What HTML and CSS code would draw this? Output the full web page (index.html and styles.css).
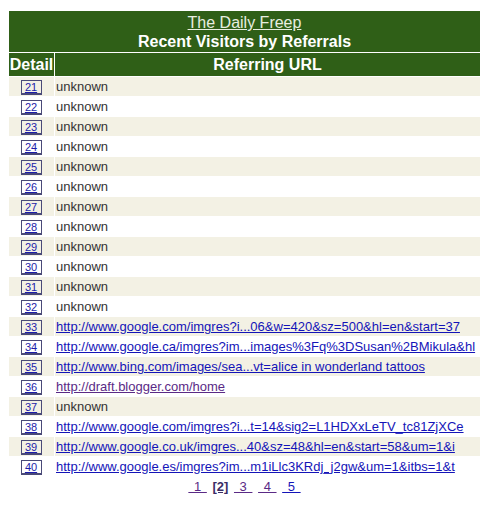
FILE: index.html
```html
<!DOCTYPE html>
<html lang="en">
<head>
    <meta charset="UTF-8">
    <title>Recent Visitors by Referrals</title>
    <link rel="stylesheet" href="styles.css">
</head>
<body>
    <table class="visitors">
        <colgroup>
            <col class="col-detail">
            <col class="col-url">
        </colgroup>
        <tr>
            <th colspan="2" class="title">
                <a href="#" class="site">The Daily Freep</a><br>
                Recent Visitors by Referrals
            </th>
        </tr>
        <tr class="head">
            <th>Detail</th>
            <th>Referring URL</th>
        </tr>
        <tr class="alt"><td class="num"><a href="#">21</a></td><td class="url">unknown</td></tr>
        <tr><td class="num"><a href="#">22</a></td><td class="url">unknown</td></tr>
        <tr class="alt"><td class="num"><a href="#">23</a></td><td class="url">unknown</td></tr>
        <tr><td class="num"><a href="#">24</a></td><td class="url">unknown</td></tr>
        <tr class="alt"><td class="num"><a href="#">25</a></td><td class="url">unknown</td></tr>
        <tr><td class="num"><a href="#">26</a></td><td class="url">unknown</td></tr>
        <tr class="alt"><td class="num"><a href="#">27</a></td><td class="url">unknown</td></tr>
        <tr><td class="num"><a href="#">28</a></td><td class="url">unknown</td></tr>
        <tr class="alt"><td class="num"><a href="#">29</a></td><td class="url">unknown</td></tr>
        <tr><td class="num"><a href="#">30</a></td><td class="url">unknown</td></tr>
        <tr class="alt"><td class="num"><a href="#">31</a></td><td class="url">unknown</td></tr>
        <tr><td class="num"><a href="#">32</a></td><td class="url">unknown</td></tr>
        <tr class="alt"><td class="num"><a href="#">33</a></td><td class="url"><a href="#">http://www.google.com/imgres?i...06&amp;w=420&amp;sz=500&amp;hl=en&amp;start=37</a></td></tr>
        <tr><td class="num"><a href="#">34</a></td><td class="url"><a href="#">http://www.google.ca/imgres?im...images%3Fq%3DSusan%2BMikula&amp;hl</a></td></tr>
        <tr class="alt"><td class="num"><a href="#">35</a></td><td class="url"><a href="#">http://www.bing.com/images/sea...vt=alice in wonderland tattoos</a></td></tr>
        <tr><td class="num"><a href="#">36</a></td><td class="url"><a href="#" class="visited">http://draft.blogger.com/home</a></td></tr>
        <tr class="alt"><td class="num"><a href="#">37</a></td><td class="url">unknown</td></tr>
        <tr><td class="num"><a href="#">38</a></td><td class="url"><a href="#">http://www.google.com/imgres?i...t=14&amp;sig2=L1HDXxLeTV_tc81ZjXCe</a></td></tr>
        <tr class="alt"><td class="num"><a href="#">39</a></td><td class="url"><a href="#">http://www.google.co.uk/imgres...40&amp;sz=48&amp;hl=en&amp;start=58&amp;um=1&amp;i</a></td></tr>
        <tr><td class="num"><a href="#">40</a></td><td class="url"><a href="#">http://www.google.es/imgres?im...m1iLlc3KRdj_j2gw&amp;um=1&amp;itbs=1&amp;t</a></td></tr>
    </table>

    <div class="pager">
        <a href="#" class="visited">&nbsp;1&nbsp;</a>
        <span class="current">[2]</span>
        <a href="#" class="visited">&nbsp;3&nbsp;</a>
        <a href="#" class="visited">&nbsp;4&nbsp;</a>
        <a href="#">&nbsp;5&nbsp;</a>
    </div>
</body>
</html>
```

FILE: styles.css
```css
body {
    margin: 0;
    padding: 10px 0 0 8px;
    font-family: "Liberation Sans", Arial, sans-serif;
    background: white;
}
.visitors {
    width: 473px;
    table-layout: fixed;
    border-collapse: separate;
    border-spacing: 1px;
}
.col-detail { width: 45px; }
.visitors th {
    background: #2f5f17;
    color: white;
    font-size: 16px;
    font-weight: bold;
    padding: 0;
}
.visitors th.title {
    height: 40px;
    line-height: 19px;
    padding-top: 1px;
}
.title .site {
    color: #e8eee0;
    font-weight: normal;
    text-decoration: underline;
}
.head th {
    height: 23px;
    line-height: 23px;
}
.visitors td {
    height: 19px;
    padding: 0;
    font-size: 13px;
    color: #333;
    white-space: nowrap;
    overflow: hidden;
}
.visitors tr.alt td {
    background: #f3f1e4;
}
.num {
    text-align: center;
}
.num a {
    display: inline-block;
    width: 19px;
    height: 12px;
    line-height: 12px;
    font-size: 11px;
    color: #1c1caa;
    border: 1px solid #4a4a78;
    border-bottom-width: 2px;
    margin-left: -1px;
    margin-top: 1px;
}
.visitors td.url {
    padding-left: 1px;
}
.url a {
    color: #1414b8;
}
.url a.visited {
    color: #5a2a86;
}
.pager {
    width: 473px;
    text-align: center;
    font-size: 13px;
    margin-top: 2px;
    word-spacing: 2px;
}
.pager a {
    color: #5a2a86;
}
.pager a:last-child {
    color: #1414b8;
}
.pager .current {
    font-weight: bold;
    color: #3a2c66;
    text-decoration: underline;
}
```
